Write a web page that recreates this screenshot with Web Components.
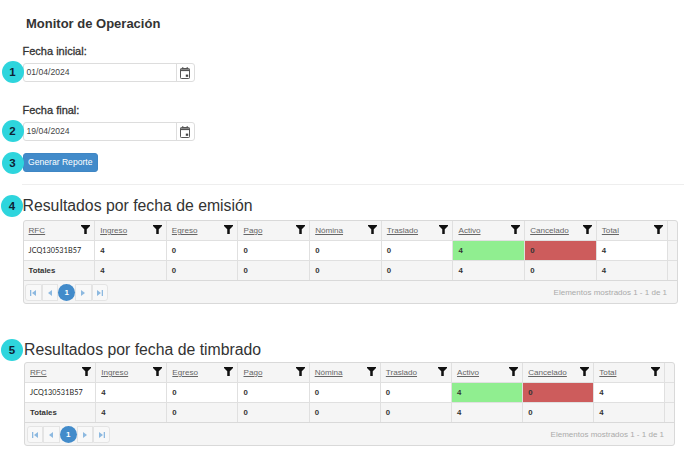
<!DOCTYPE html>
<html lang="es">
<head>
<meta charset="utf-8">
<title>Monitor de Operación</title>
<style>
  html, body { margin: 0; background: #fff; }
  body { font-family: "Liberation Sans", Arial, sans-serif; color: #333; overflow: hidden; }
</style>
</head>
<body>
<monitor-page></monitor-page>

<script>
const FILTER_ICON = `<svg viewBox="0 0 10 10" width="9" height="9"><path d="M0 0h10v1L6.4 4.6V10H3.6V4.6L0 1z" fill="#111"/></svg>`;

class StepBadge extends HTMLElement {
  constructor() {
    super();
    this.attachShadow({ mode: 'open' });
    this.shadowRoot.innerHTML = `
      <style>
        :host {
          position: absolute;
          left: var(--badge-left, -22px);
          top: var(--badge-top, -3px);
          width: 22px;
          height: 22px;
          border-radius: 50%;
          background: #2ed5dd;
          color: #0f2233;
          font: bold 11.5px "Liberation Sans", sans-serif;
          display: flex;
          align-items: center;
          justify-content: center;
          z-index: 2;
        }
      </style>
      <slot></slot>
    `;
  }
}

class DateField extends HTMLElement {
  constructor() {
    super();
    this.attachShadow({ mode: 'open' });
    this.shadowRoot.innerHTML = `
      <style>
        :host { display: block; position: relative; width: 172px; }
        .label { font-size: 11px; color: #333; line-height: 14px; margin-bottom: 5px; -webkit-text-stroke: .3px #333; }
        .box {
          position: relative;
          display: flex;
          height: 19px;
          box-sizing: border-box;
          border: 1px solid #ddd;
          border-radius: 3px;
          background: #fff;
        }
        .value { flex: 1; font-size: 8.6px; line-height: 17px; padding-left: 3px; color: #444; }
        .btn {
          width: 17px;
          border-left: 1px solid #ddd;
          display: flex;
          align-items: center;
          justify-content: center;
        }
      </style>
      <div class="label"></div>
      <div class="box">
        <slot name="badge"></slot>
        <div class="value"></div>
        <div class="btn">
          <svg viewBox="0 0 10 12" width="10" height="12" fill="none" stroke="#555">
            <rect x=".5" y="1.5" width="9" height="10" rx=".8"/>
            <path d="M.5 3.2h9" stroke-width="1.8"/>
            <path d="M2.8 0v2M7.2 0v2"/>
            <rect x="5.8" y="7.6" width="2.4" height="2.2" fill="#444" stroke="none"/>
          </svg>
        </div>
      </div>
    `;
  }

  connectedCallback() {
    this.shadowRoot.querySelector('.label').textContent = this.getAttribute('label');
    this.shadowRoot.querySelector('.value').textContent = this.getAttribute('value');
  }
}

class ReportButton extends HTMLElement {
  constructor() {
    super();
    this.attachShadow({ mode: 'open' });
    this.shadowRoot.innerHTML = `
      <style>
        :host {
          display: block;
          position: relative;
          width: 75.5px;
          height: 19px;
          box-sizing: border-box;
          border: 1px solid #3f86c4;
          border-radius: 3px;
          background: #428bca;
          color: #fff;
          font-size: 8.6px;
          line-height: 17px;
          text-align: center;
        }
      </style>
      <slot name="badge"></slot>
      <slot></slot>
    `;
  }
}

class ResultGrid extends HTMLElement {
  constructor() {
    super();
    this.attachShadow({ mode: 'open' });

    this.columns = ['RFC', 'Ingreso', 'Egreso', 'Pago', 'Nómina', 'Traslado', 'Activo', 'Cancelado', 'Total'];
    this.row = ['JCQ130531B57', '4', '0', '0', '0', '0', '4', '0', '4'];
    this.totals = ['Totales', '4', '0', '0', '0', '0', '4', '0', '4'];

    this.shadowRoot.innerHTML = `
      <style>
        :host {
          display: block;
          box-sizing: border-box;
          border: 1px solid #d9d9d9;
          border-radius: 3px;
          font-size: 7.8px;
          color: #333;
          overflow: hidden;
          background: #f5f5f5;
        }
        .table {
          display: grid;
          grid-template-columns: repeat(9, 1fr) 8.5px;
          grid-template-rows: 20px 20px 19px;
          border-bottom: 1px solid #d9d9d9;
        }
        .cell {
          box-sizing: border-box;
          display: flex;
          align-items: center;
          padding-left: 5px;
          border-right: 1px solid #e0e0e0;
          border-bottom: 1px solid #e0e0e0;
          font-weight: bold;
        }
        .head { justify-content: space-between; padding-right: 4px; font-size: 8.1px; font-weight: normal; color: #666; text-decoration: underline; }
        .head svg { margin-top: -2px; }
        .rfc { font-family: Lato, sans-serif; font-size: 7.2px; font-weight: normal; color: #222; letter-spacing: .1px; }
        .body { background: #fff; }
        .active { background: #90ee90; }
        .cancelled { background: #cd5c5c; }
        .gutter { border-right: 0; padding: 0; }
        .last { border-bottom: 0; }
        .pager {
          display: flex;
          align-items: center;
          justify-content: space-between;
          height: 22px;
          padding: 1px 10px 0 1.5px;
          box-sizing: border-box;
        }
        .buttons { display: flex; align-items: center; }
        .page {
          width: 16.6px;
          height: 17px;
          box-sizing: border-box;
          background: #f8f8f8;
          border: 1px solid #e4e4e4;
          display: flex;
          align-items: center;
          justify-content: center;
        }
        .page:first-child { border-radius: 3px 0 0 3px; }
        .page:last-child { border-radius: 0 3px 3px 0; }
        .current {
          width: 17px;
          height: 17px;
          border-radius: 50%;
          background: #428bca;
          color: #fff;
          font-size: 8px;
          font-weight: bold;
          display: flex;
          align-items: center;
          justify-content: center;
          z-index: 1;
        }
        .info { color: #aaa; font-size: 8px; }
      </style>
      <div class="table"></div>
      <div class="pager">
        <div class="buttons">
          <div class="page"><svg viewBox="0 0 8 8" width="8" height="8" fill="#8db9e0"><path d="M1 1h1.3v6H1zM7 1v6L3 4z"/></svg></div>
          <div class="page"><svg viewBox="0 0 8 8" width="8" height="8" fill="#8db9e0"><path d="M6 1v6L2 4z"/></svg></div>
          <div class="current">1</div>
          <div class="page"><svg viewBox="0 0 8 8" width="8" height="8" fill="#8db9e0"><path d="M2 1v6l4-3z"/></svg></div>
          <div class="page"><svg viewBox="0 0 8 8" width="8" height="8" fill="#8db9e0"><path d="M1 1v6l4-3zM5.7 1H7v6H5.7z"/></svg></div>
        </div>
        <div class="info">Elementos mostrados 1 - 1 de 1</div>
      </div>
    `;
  }

  connectedCallback() {
    const table = this.shadowRoot.querySelector('.table');
    let html = '';
    for (const col of this.columns) {
      html += `<div class="cell head"><span>${col}</span>${FILTER_ICON}</div>`;
    }
    html += `<div class="cell gutter"></div>`;
    this.row.forEach((val, i) => {
      let cls = 'body';
      if (i === 0) cls += ' rfc';
      if (i === 6) cls = 'active';
      if (i === 7) cls = 'cancelled';
      html += `<div class="cell ${cls}">${val}</div>`;
    });
    html += `<div class="cell gutter"></div>`;
    for (const val of this.totals) {
      html += `<div class="cell last">${val}</div>`;
    }
    html += `<div class="cell gutter last"></div>`;
    table.innerHTML = html;
  }
}

class ResultSection extends HTMLElement {
  constructor() {
    super();
    this.attachShadow({ mode: 'open' });
    this.shadowRoot.innerHTML = `
      <style>
        :host { display: block; position: relative; }
        h3 {
          position: relative;
          margin: 0 0 var(--title-gap, 4px);
          font-size: 15.8px;
          line-height: 20px;
          font-weight: normal;
          color: #333;
        }
      </style>
      <h3><slot name="badge"></slot><span></span></h3>
      <result-grid></result-grid>
    `;
  }

  connectedCallback() {
    this.shadowRoot.querySelector('h3 span').textContent = this.getAttribute('heading');
  }
}

class MonitorPage extends HTMLElement {
  constructor() {
    super();
    this.attachShadow({ mode: 'open' });
    this.shadowRoot.innerHTML = `
      <style>
        :host { display: block; width: 684px; height: 457px; overflow: hidden; padding-top: 16px; box-sizing: border-box; }
        h1 { margin: 0 0 12px 26px; font-size: 13px; line-height: 16px; font-weight: bold; color: #333; }
        .form { margin-left: 22.5px; }
        date-field { margin-bottom: 21px; }
        date-field + date-field { margin-bottom: 12px; }
        hr { margin: 12px 0 11px 22px; border: 0; border-top: 1px solid #eee; }
        .first { margin: 0 6px 0 22.5px; }
        .second { margin: 36px 9px 0 24px; --title-gap: 2px; }
      </style>
      <h1>Monitor de Operación</h1>
      <div class="form">
        <date-field label="Fecha inicial:" value="01/04/2024"><step-badge slot="badge">1</step-badge></date-field>
        <date-field label="Fecha final:" value="19/04/2024"><step-badge slot="badge">2</step-badge></date-field>
        <report-button>Generar Reporte<step-badge slot="badge" style="--badge-top:-2px">3</step-badge></report-button>
      </div>
      <hr>
      <result-section class="first" heading="Resultados por fecha de emisión"><step-badge slot="badge" style="--badge-top:-1px;--badge-left:-21.5px">4</step-badge></result-section>
      <result-section class="second" heading="Resultados por fecha de timbrado"><step-badge slot="badge" style="--badge-top:-1px;--badge-left:-23px">5</step-badge></result-section>
    `;
  }
}

customElements.define('step-badge', StepBadge);
customElements.define('date-field', DateField);
customElements.define('report-button', ReportButton);
customElements.define('result-grid', ResultGrid);
customElements.define('result-section', ResultSection);
customElements.define('monitor-page', MonitorPage);
</script>
</body>
</html>
